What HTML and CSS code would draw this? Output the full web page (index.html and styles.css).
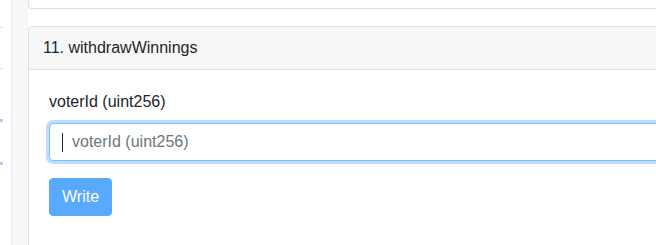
FILE: index.html
```html
<!DOCTYPE html>
<html lang="en">
<head>
    <meta charset="UTF-8">
    <meta name="viewport" content="width=device-width, initial-scale=1.0">
    <title>Contract functions</title>
    <link rel="stylesheet" href="styles.css">
</head>
<body>
    <div class="sidebar">
        <div class="side-line grey" style="top: 27px"></div>
        <div class="side-line grey" style="top: 68px"></div>
        <div class="side-line blue" style="top: 119px"></div>
        <div class="side-line blue" style="top: 162px"></div>
    </div>
    <div class="gutter"></div>
    <div class="content">
        <div class="card card-prev"></div>

        <div class="card">
            <div class="card-header">11. withdrawWinnings</div>
            <div class="card-body">
                <div class="form-group">
                    <label class="form-label">voterId (uint256)</label>
                    <div class="input-wrap">
                        <input class="form-control" type="text" placeholder="voterId (uint256)">
                        <span class="caret"></span>
                    </div>
                </div>
                <button class="btn-write" disabled>Write</button>
            </div>
        </div>
    </div>
</body>
</html>
```

FILE: styles.css
```css
body {
    font-family: "Liberation Sans", Arial, sans-serif;
    font-size: 16px;
    line-height: 1.5;
    color: #212529;
    margin: 0;
    background-color: #fff;
    display: flex;
    height: 245px;
    overflow: hidden;
}
.sidebar {
    position: relative;
    width: 11px;
    flex-shrink: 0;
    border-right: 1px solid #e8e8e8;
    background-color: #fff;
}
.side-line {
    position: absolute;
    left: 0;
    width: 3px;
}
.side-line.grey {
    height: 1px;
    background-color: #dcdcdc;
}
.side-line.blue {
    height: 3px;
    background-color: #a9cff5;
}
.gutter {
    width: 16px;
    flex-shrink: 0;
    background-color: #f6f7f8;
}
.content {
    flex: 1;
    margin-right: -30px;
}
.card {
    border: 1px solid #dfdfdf;
    border-radius: 4px;
    background-color: #fff;
}
.card-prev {
    height: 8px;
    border-top: none;
    border-radius: 0 0 4px 4px;
    margin-bottom: 17px;
}
.card-header {
    padding: 9px 14px;
    line-height: 24px;
    background-color: #f7f7f7;
    border-bottom: 1px solid #dfdfdf;
    border-radius: 4px 4px 0 0;
}
.card-body {
    padding: 20px 20px 40px;
}
.form-group {
    margin-bottom: 17px;
}
.form-label {
    display: block;
    margin-bottom: 9px;
}
.input-wrap {
    position: relative;
}
.form-control {
    display: block;
    box-sizing: border-box;
    width: 100%;
    height: 38px;
    padding: 6px 12px 6px 22px;
    font-family: inherit;
    font-size: 16px;
    color: #495057;
    border: 1px solid #80bdff;
    border-radius: 4px;
    box-shadow: 0 0 0 3px rgba(0, 123, 255, 0.25);
    outline: none;
}
.form-control::placeholder {
    color: #6c757d;
}
.caret {
    position: absolute;
    left: 13px;
    top: 10px;
    width: 1px;
    height: 19px;
    background-color: #222;
}
.btn-write {
    padding: 6px 12px;
    font-family: inherit;
    font-size: 16px;
    line-height: 1.5;
    color: #fff;
    background-color: #59a9ff;
    border: 1px solid #59a9ff;
    border-radius: 4px;
}
```
